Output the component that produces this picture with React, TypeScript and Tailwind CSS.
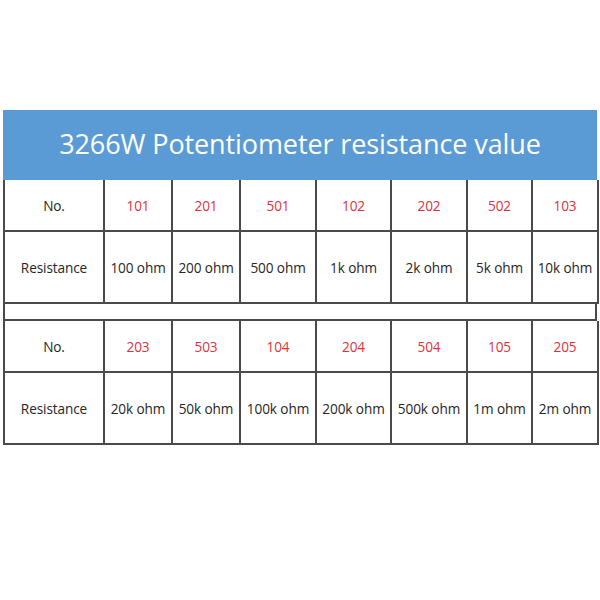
const cols = "grid grid-cols-[100px_68px_68px_76px_75px_76px_65px_66px]";

const tables = [
  {
    codes: ["101", "201", "501", "102", "202", "502", "103"],
    values: ["100 ohm", "200 ohm", "500 ohm", "1k ohm", "2k ohm", "5k ohm", "10k ohm"],
  },
  {
    codes: ["203", "503", "104", "204", "504", "105", "205"],
    values: ["20k ohm", "50k ohm", "100k ohm", "200k ohm", "500k ohm", "1m ohm", "2m ohm"],
  },
];

function Cell({ children, red }: { children: React.ReactNode; red?: boolean }) {
  return (
    <div
      className={`flex items-center justify-center border-r-2 border-b-2 border-[#4a4a4a] whitespace-nowrap pt-[2px] ${
        red ? "text-[#e3303b]" : "text-[#262626]"
      }`}
    >
      {children}
    </div>
  );
}

export default function App() {
  return (
    <div
      className="w-[600px] h-[600px] bg-white pt-[110px] pl-[3px]"
      style={{ fontFamily: '"Open Sans", "Noto Sans", sans-serif' }}
    >
      <div className="w-[594px]">
        <div className="h-[70px] bg-[#5b9bd5] flex items-center justify-center text-white text-[27px] tracking-[-0.1px] pb-[2px]">
          3266W Potentiometer resistance value
        </div>
        <div className="border-l-2 border-[#4a4a4a] text-[13.6px] tracking-[-0.1px]">
          {tables.map((t, i) => (
            <div key={i}>
              {i > 0 && <div className="h-[17px] border-r-2 border-b-2 border-[#4a4a4a]" />}
              <div className={`${cols} h-[52px]`}>
                <Cell>No.</Cell>
                {t.codes.map((c) => (
                  <Cell key={c} red>
                    {c}
                  </Cell>
                ))}
              </div>
              <div className={`${cols} h-[72px]`}>
                <Cell>Resistance</Cell>
                {t.values.map((v) => (
                  <Cell key={v}>{v}</Cell>
                ))}
              </div>
            </div>
          ))}
        </div>
      </div>
    </div>
  );
}
